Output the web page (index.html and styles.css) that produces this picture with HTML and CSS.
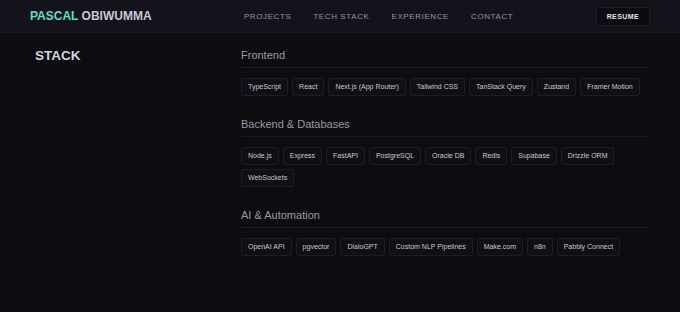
FILE: index.html
```html
<!DOCTYPE html>
<html lang="en">
<head>
    <meta charset="UTF-8">
    <title>Pascal Obiwumma - Stack</title>
    <link rel="stylesheet" href="styles.css">
</head>
<body>
    <header class="topbar">
        <div class="logo"><span class="logo-first">PASCAL</span> OBIWUMMA</div>
        <nav class="nav">
            <a href="#">PROJECTS</a>
            <a href="#">TECH STACK</a>
            <a href="#">EXPERIENCE</a>
            <a href="#">CONTACT</a>
        </nav>
        <a class="resume" href="#">RESUME</a>
    </header>

    <main class="stack">
        <h2 class="stack-title">STACK</h2>
        <div class="groups">
            <section class="group">
                <h3 class="group-title">Frontend</h3>
                <ul class="chips">
                    <li>TypeScript</li>
                    <li>React</li>
                    <li>Next.js (App Router)</li>
                    <li>Tailwind CSS</li>
                    <li>TanStack Query</li>
                    <li>Zustand</li>
                    <li>Framer Motion</li>
                </ul>
            </section>
            <section class="group">
                <h3 class="group-title">Backend &amp; Databases</h3>
                <ul class="chips">
                    <li>Node.js</li>
                    <li>Express</li>
                    <li>FastAPI</li>
                    <li>PostgreSQL</li>
                    <li>Oracle DB</li>
                    <li>Redis</li>
                    <li>Supabase</li>
                    <li>Drizzle ORM</li>
                    <li>WebSockets</li>
                </ul>
            </section>
            <section class="group">
                <h3 class="group-title">AI &amp; Automation</h3>
                <ul class="chips">
                    <li>OpenAI API</li>
                    <li>pgvector</li>
                    <li>DialoGPT</li>
                    <li>Custom NLP Pipelines</li>
                    <li>Make.com</li>
                    <li>n8n</li>
                    <li>Pabbly Connect</li>
                </ul>
            </section>
        </div>
    </main>
</body>
</html>
```

FILE: styles.css
```css
html {
    min-height: 100%;
}

body {
    margin: 0;
    min-height: 100vh;
    background-color: #0c0c11;
    font-family: "Liberation Sans", Arial, sans-serif;
    color: #c9c9d0;
}

/* top bar */
.topbar {
    display: flex;
    align-items: center;
    justify-content: space-between;
    height: 32px;
    padding: 0 30px;
    background-color: #14131c;
    border-bottom: 1px solid #1b1a23;
}

.logo {
    font-size: 12px;
    font-weight: bold;
    color: #c8c8d0;
    white-space: nowrap;
}

.logo-first {
    color: #5fdccb;
}

.nav {
    display: flex;
    gap: 22px;
    margin-left: 10px;
}

.nav a {
    font-size: 8px;
    letter-spacing: 0.6px;
    color: #9494a0;
    text-decoration: none;
}

.resume {
    display: block;
    padding: 5px 10px;
    background-color: #0b0b10;
    border: 1px solid #1e1d26;
    border-radius: 2px;
    font-size: 7px;
    font-weight: bold;
    letter-spacing: 0.4px;
    line-height: 7px;
    color: #e4e4ea;
    text-decoration: none;
}

/* stack section */
.stack {
    display: grid;
    grid-template-columns: 206px 1fr;
    padding: 15px 31px 0 35px;
}

.stack-title {
    margin: 0;
    font-size: 13.5px;
    line-height: 16px;
    font-weight: bold;
    color: #d4d4da;
}

.groups {
    display: flex;
    flex-direction: column;
    gap: 21px;
}

.group-title {
    margin: 0;
    padding-bottom: 5px;
    border-bottom: 1px solid #1a1a22;
    font-size: 11px;
    line-height: 14px;
    font-weight: normal;
    color: #9a9aa4;
}

.chips {
    display: flex;
    flex-wrap: wrap;
    gap: 4px;
    margin: 10px 0 0;
    padding: 0;
    list-style: none;
}

.chips li {
    padding: 4px 6px;
    background-color: #0f0f15;
    border: 1px solid #1d1d25;
    border-radius: 2px;
    font-size: 7px;
    line-height: 8px;
    color: #c9c9d0;
}
```
